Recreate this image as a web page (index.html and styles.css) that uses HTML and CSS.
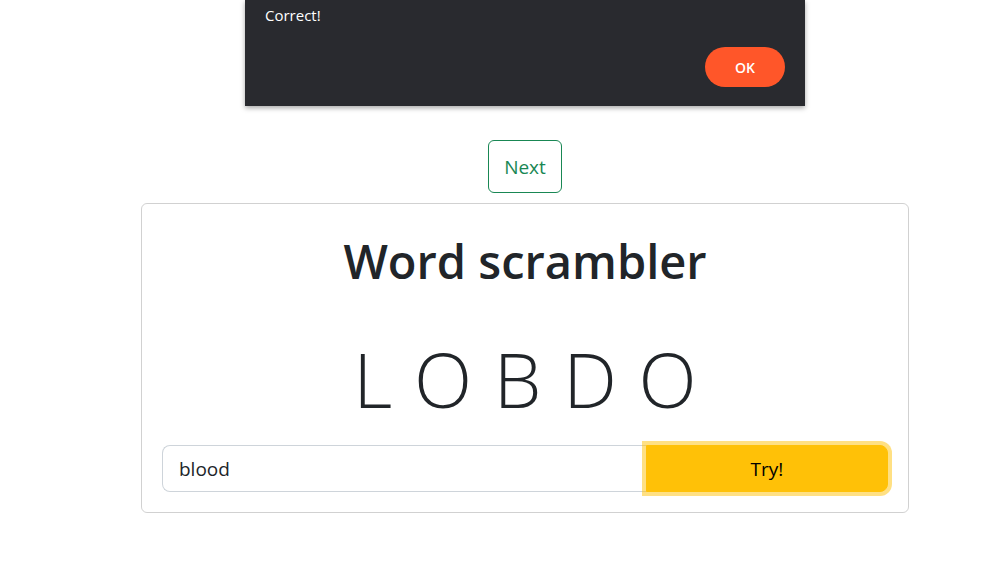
FILE: index.html
```html
<!DOCTYPE html>
<html lang="en">
<head>
<meta charset="utf-8">
<title>Word scrambler</title>
<link rel="stylesheet" href="styles.css">
</head>
<body>
<div class="dialog">
  <div class="dialog-msg">Correct!</div>
  <div class="dialog-actions"><button class="ok-btn">OK</button></div>
</div>
<main class="page">
  <div class="next-row"><button class="next-btn">Next</button></div>
  <section class="card">
    <h1 class="title">Word scrambler</h1>
    <div class="scrambled">L O B D O</div>
    <div class="input-group">
      <input class="guess" type="text" value="blood">
      <button class="try-btn">Try!</button>
    </div>
  </section>
</main>
</body>
</html>
```
FILE: styles.css
```css
html, body {
  margin: 0;
  padding: 0;
  background: #fff;
}
body {
  font-family: "Open Sans", "Noto Sans", "Liberation Sans", sans-serif;
  color: #212529;
  width: 1002px;
  height: 565px;
  overflow: hidden;
  position: relative;
}
.dialog {
  position: absolute;
  top: 0;
  left: 245px;
  width: 560px;
  height: 106px;
  background: #292a2f;
  box-shadow: 0 2px 5px rgba(0,0,0,0.35);
  box-sizing: border-box;
  padding: 5px 20px 0 20px;
}
.dialog-msg {
  color: #fff;
  font-size: 15px;
  line-height: 20px;
}
.dialog-actions {
  display: flex;
  justify-content: flex-end;
  margin-top: 22px;
}
.ok-btn {
  width: 80px;
  height: 40px;
  border: none;
  border-radius: 20px;
  background: #ff5629;
  color: #fff;
  font-family: inherit;
  font-weight: 600;
  font-size: 14px;
}
.page {
  padding-top: 140px;
  width: 768px;
  margin-left: 141px;
}
.next-row {
  display: flex;
  justify-content: center;
  margin-bottom: 10px;
}
.next-btn {
  box-sizing: border-box;
  height: 53px;
  padding: 0 15px;
  border: 1px solid #198754;
  border-radius: 6px;
  background: #fff;
  color: #198754;
  font-family: inherit;
  font-size: 19px;
}
.card {
  border: 1px solid rgba(0,0,0,0.18);
  border-radius: 6px;
  padding: 20px;
  box-sizing: border-box;
  height: 310px;
  display: flex;
  flex-direction: column;
}
.title {
  margin: 7px 0 0 0;
  text-align: center;
  font-size: 47px;
  line-height: 60px;
  font-weight: 600;
}
.scrambled {
  text-align: center;
  font-size: 76px;
  font-weight: 300;
  line-height: 96px;
  margin-top: 40px;
  word-spacing: 2px;
}
.input-group {
  display: flex;
  margin-top: auto;
  height: 47px;
}
.guess {
  flex: 1;
  box-sizing: border-box;
  height: 47px;
  border: 1px solid #ced4da;
  border-right: none;
  border-radius: 8px 0 0 8px;
  padding: 0 16px;
  font-family: inherit;
  font-size: 19px;
  color: #212529;
  outline: none;
}
.try-btn {
  width: 242px;
  height: 47px;
  box-sizing: border-box;
  border: 1px solid #ffc107;
  border-radius: 0 8px 8px 0;
  background: #ffc107;
  color: #000;
  font-family: inherit;
  font-size: 19px;
  box-shadow: 0 0 0 4px rgba(255,193,7,0.5);
}
```
